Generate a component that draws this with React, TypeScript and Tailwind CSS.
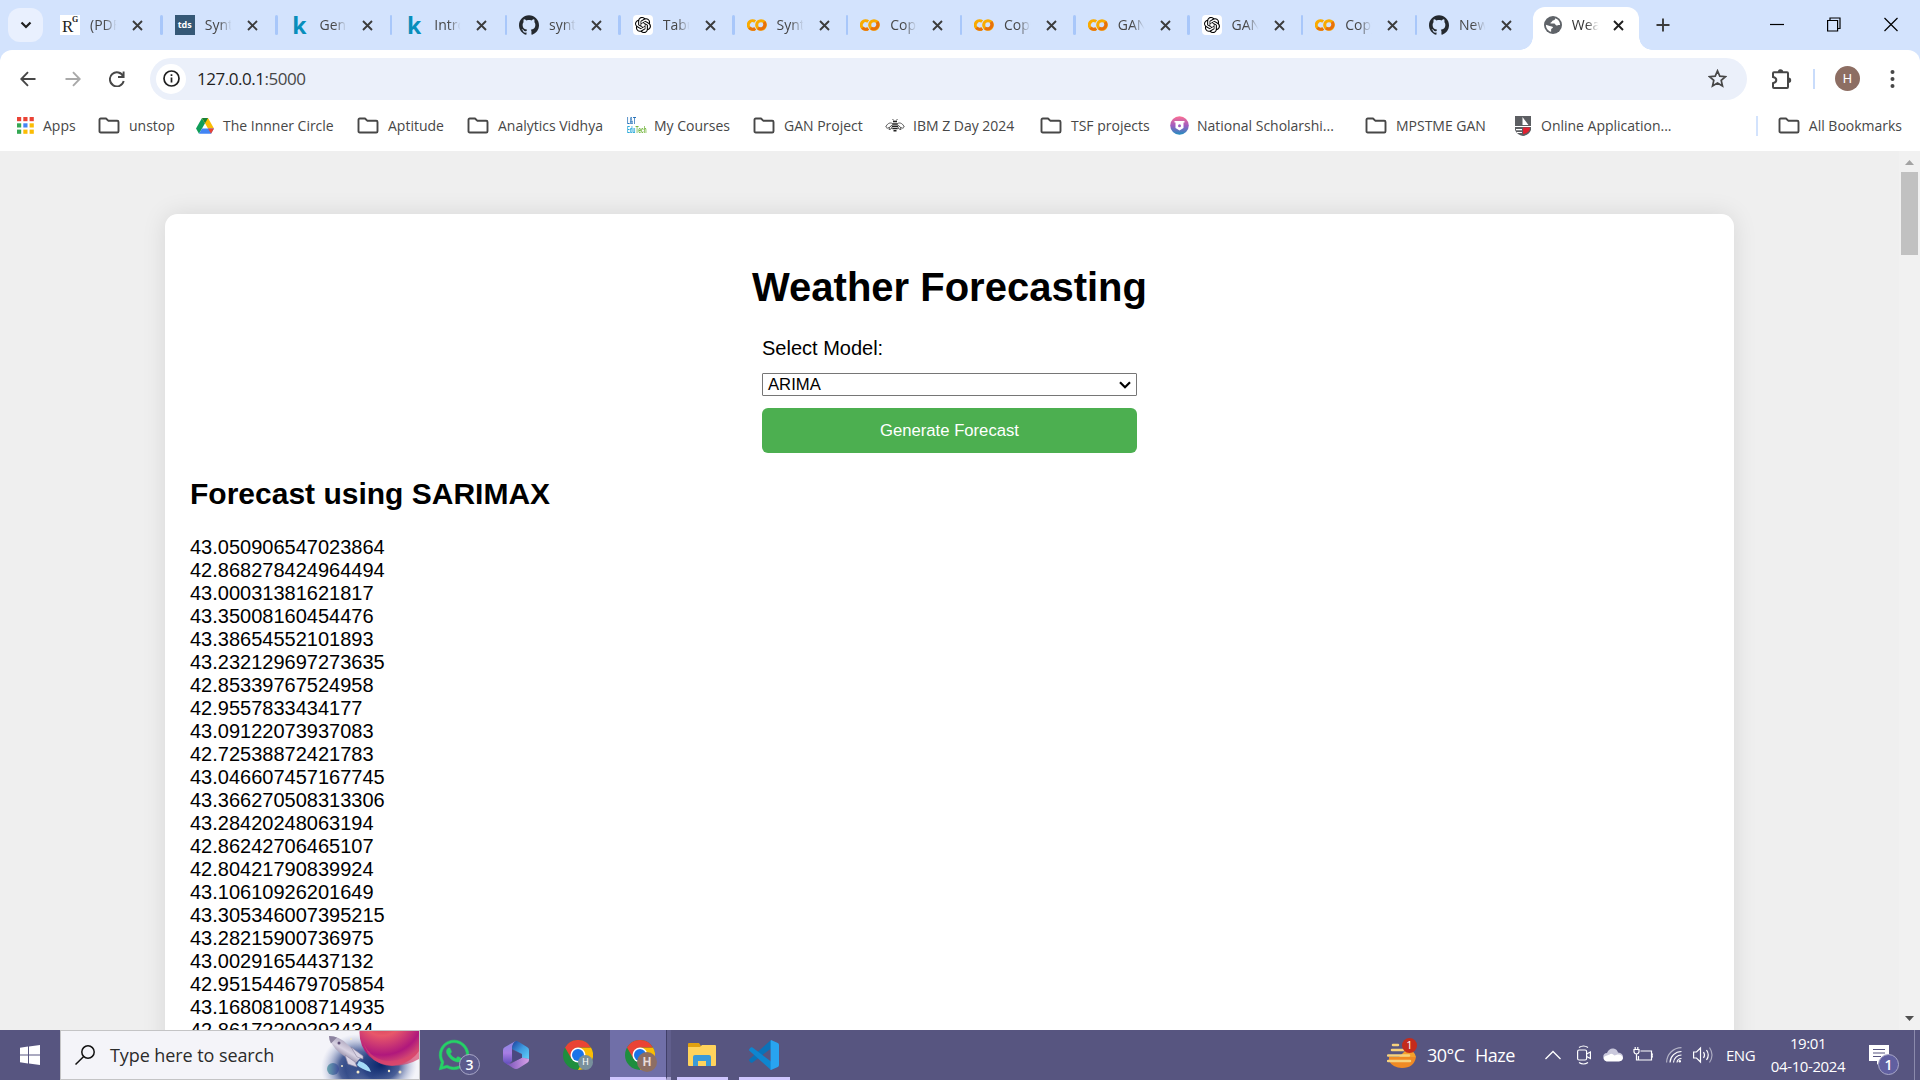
import React from "react";
import { SiGithub, SiOpenai } from "react-icons/si";
import { FaWhatsapp } from "react-icons/fa";

const UI = "font-['Open_Sans','Noto_Sans',sans-serif]";

const X = ({ c = "#3c3c3c" }: { c?: string }) => (
  <svg className="h-[11px] w-[11px] shrink-0" viewBox="0 0 11 11" stroke={c} strokeWidth="1.9" fill="none">
    <path d="M1 1l9 9M10 1l-9 9" />
  </svg>
);

const Folder = () => (
  <svg className="h-[18px] w-[22px] shrink-0" viewBox="0 0 22 18" fill="none" stroke="#474747" strokeWidth="1.9" strokeLinejoin="round">
    <path d="M1.500 14.200V2.800q0-1.300 1.300-1.300H8l2.200 2.200h9q1.300 0 1.300 1.300v9.200q0 1.300-1.300 1.300H2.800q-1.300 0-1.300-1.300z" />
  </svg>
);

const RG = () => (
  <span className="relative block h-5 w-5 bg-white font-['Liberation_Serif',serif] leading-none text-[#222]">
    <span className="absolute left-[2px] top-[3px] text-[17px]">R</span>
    <span className="absolute left-[12px] top-[1px] text-[8px] font-bold">G</span>
  </span>
);
const Tds = () => (
  <span className="flex h-5 w-5 items-center justify-center bg-[#355876] pb-px font-['Open_Sans',sans-serif] text-[9px] font-bold text-white">tds</span>
);
const K = () => (
  <span className="flex h-5 w-5 items-center justify-center font-['Open_Sans',sans-serif] text-[23px] font-bold leading-[20px] text-[#088ebb]">k</span>
);
const Gh = () => <SiGithub className="h-5 w-5 text-[#24292f]" />;
const Gpt = () => (
  <span className="flex h-5 w-5 items-center justify-center rounded-[4px] bg-white">
    <SiOpenai className="h-4 w-4 text-black" />
  </span>
);
const Colab = () => (
  <svg className="h-5 w-5" viewBox="0 0 20 20" fill="none" strokeWidth="3.1">
    <path d="M8.200 6.600A4.300 4.300 0 1 0 8.200 13.400" stroke="#f9ab00" />
    <path d="M2.400 12.800A4.300 4.300 0 0 0 8.200 13.400" stroke="#e8710a" />
    <circle cx="14" cy="10" r="4.300" stroke="#f9ab00" />
    <path d="M11 13A4.300 4.300 0 0 0 17 7" stroke="#e8710a" />
  </svg>
);
const Globe = () => (
  <svg className="h-[18px] w-[18px]" viewBox="0 0 18 18">
    <circle cx="9" cy="9" r="9" fill="#5f6368" />
    <path d="M11.200 2.300c0 1.500-.9 2-2.200 2.200-.9.200-.8 1.300-1.700 1.700-1 .4-1.100 1.300-.2 1.400h3c1.300 0 1.200 1.700 2.300 1.900 1.100.2 1.900-.9 3.700-.5 0-3-1.800-5.700-4.900-6.700z" fill="#fff" />
    <path d="M1.900 8.700l3.800 1.200c1.500.4 2.900.2 3.200 1.300.3 1.200-1.700 1-1.800 2.200-.1 1 .4 1.500-.1 2.400C4 15 1.900 12 1.900 8.700z" fill="#fff" />
  </svg>
);

const tabs: [React.FC, string][] = [
  [RG, "(PDF)"], [Tds, "Synth"], [K, "Gene"], [K, "Intro"], [Gh, "synth"], [Gpt, "Tabul"], [Colab, "Synth"],
  [Colab, "Copy"], [Colab, "Copy"], [Colab, "GAN"], [Gpt, "GAN"], [Colab, "Copy"], [Gh, "New"],
];

function TabText({ children, c }: { children: string; c: string }) {
  return (
    <span className={"ml-[10px] w-[28px] overflow-hidden whitespace-nowrap text-[14px] leading-[22px] [mask-image:linear-gradient(to_right,#000_50%,transparent_95%)] " + c}>
      {children}
    </span>
  );
}

function TabStrip() {
  return (
    <div className="flex h-[50px] shrink-0 bg-[#d3e3fd] pl-2">
      <div className="mt-2 flex h-[34px] w-[35px] items-center justify-center rounded-[12px] bg-[#e9f0fe]">
        <svg className="h-[8px] w-[12px]" viewBox="0 0 12 8" fill="none" stroke="#1f1f1f" strokeWidth="2.200"><path d="M1.500 1.500L6 6l4.500-4.500" /></svg>
      </div>
      <div className="ml-[3px] flex">
        {tabs.map(([Icon, t], i) => (
          <div key={i} className={"flex h-[50px] shrink-0 items-center pl-[14px] " + (i < 4 ? "w-[114.75px]" : "w-[113.75px]")}>
            <Icon />
            <TabText c="text-[#474747]">{t}</TabText>
            <span className="ml-[14px] flex"><X /></span>
            {i < 12 && <span className="ml-auto mr-[-2px] h-5 w-[2.500px] rounded bg-[#a8c7fa]" />}
          </div>
        ))}
      </div>
      <div className="ml-[-9px] flex items-end">
        <span className="h-[13px] w-[13px] bg-[radial-gradient(circle_at_0_0,transparent_12.5px,#fff_13px)]" />
        <div className="flex h-[43px] w-[106px] items-center rounded-t-[12px] bg-white pb-[7px] pl-[11px]">
          <Globe />
          <TabText c="text-[#333]">Weat</TabText>
          <span className="ml-[13px] flex"><X c="#1f1f1f" /></span>
        </div>
        <span className="h-[13px] w-[13px] bg-[radial-gradient(circle_at_100%_0,transparent_12.5px,#fff_13px)]" />
      </div>
      <svg className="ml-[4px] mt-[18px] h-[14px] w-[14px]" viewBox="0 0 14 14" stroke="#3c3c3c" strokeWidth="1.900"><path d="M7 .5v13M.5 7h13" /></svg>
      <div className="ml-auto mr-[22px] mt-[17px] flex items-start gap-[43px]">
        <svg className="h-[15px] w-[14px]" viewBox="0 0 14 15" stroke="#000" strokeWidth="1.200"><path d="M0 7.500h14" /></svg>
        <svg className="h-[15px] w-[14px]" viewBox="0 0 14 15" fill="none" stroke="#000" strokeWidth="1.200"><path d="M.6 3.500h10v10.500h-10zM3 3.500V1h10v10.500h-2.400" /></svg>
        <svg className="h-[15px] w-[14px]" viewBox="0 0 14 15" stroke="#000" strokeWidth="1.200"><path d="M.5 1l13 13M13.500 1l-13 13" /></svg>
      </div>
    </div>
  );
}

function Toolbar() {
  return (
    <div className="flex h-[57px] shrink-0 items-center rounded-t-[12px] bg-white pl-5 pr-5">
      <svg className="h-4 w-4" viewBox="0 0 16 16" fill="none" stroke="#474747" strokeWidth="1.900"><path d="M15.500 8H1.500M8 1.200L1.300 8 8 14.800" /></svg>
      <svg className="ml-[29px] h-4 w-4" viewBox="0 0 16 16" fill="none" stroke="#a9a9a9" strokeWidth="1.900"><path d="M.5 8h14M8 1.200L14.700 8 8 14.800" /></svg>
      <svg className="ml-[28px] h-4 w-4" viewBox="0 0 16 16" fill="none" stroke="#474747" strokeWidth="1.900"><path d="M14.300 5.500A7 7 0 1 0 14.700 10M14.600.5v5.500H9" /></svg>
      <div className="ml-[25px] flex h-[42px] w-[1597px] items-center rounded-full bg-[#ebf0fa] pl-[6px] pr-[20px]">
        <span className="flex h-[30px] w-[30px] items-center justify-center rounded-full bg-white">
          <svg className="h-[17px] w-[17px]" viewBox="0 0 17 17" fill="none" stroke="#1f1f1f" strokeWidth="1.700"><circle cx="8.500" cy="8.500" r="7.500" /><path d="M8.500 7.500v5M8.500 4.300v1.700" /></svg>
        </span>
        <span className="ml-[11px] pt-px text-[17px] tracking-[-0.47px] text-[#1f1f1f]">127.0.0.1<span className="text-[#474747]">:5000</span></span>
        <svg className="ml-auto h-[19px] w-[19px]" viewBox="0 0 19 19" fill="none" stroke="#474747" strokeWidth="1.700" strokeLinejoin="miter"><path d="M9.500 1.800l2.300 5.300 5.700.5-4.300 3.800 1.300 5.600-5-3-5 3 1.300-5.600L1.500 7.600l5.700-.5z" /></svg>
      </div>
      <svg className="ml-[24px] h-[21px] w-[21px]" viewBox="0 0 21 21" fill="none">
        <path d="M2 5.200q0-1 1-1h13q1 0 1 1V19q0 1-1 1H3q-1 0-1-1v-3.800q3.300-.6 3.300-3.100T2 9z" stroke="#474747" strokeWidth="2" />
        <path d="M6.800 4a2.700 2.700 0 0 1 5.400 0zM17.500 9.500a2.700 2.700 0 0 1 0 5.400z" fill="#474747" />
      </svg>
      <span className="ml-[21px] h-5 w-[2px] bg-[#c9dcfb]" />
      <span className="ml-[20px] flex h-[25px] w-[25px] items-center justify-center rounded-full bg-[#8d6e63] font-['Roboto',sans-serif] text-[13px] text-white">H</span>
      <svg className="ml-[30px] h-[18px] w-[5px]" viewBox="0 0 5 18" fill="#474747"><circle cx="2.500" cy="2" r="2" /><circle cx="2.500" cy="9" r="2" /><circle cx="2.500" cy="16" r="2" /></svg>
    </div>
  );
}

const AppsIcon = () => (
  <svg className="h-[17px] w-[17px] shrink-0" viewBox="0 0 17 17">
    {["#ea4335", "#ea4335", "#ea4335", "#34a853", "#4285f4", "#fbbc04", "#34a853", "#fbbc04", "#fbbc04"].map((c, i) => (
      <rect key={i} x={(i % 3) * 6.300} y={Math.floor(i / 3) * 6.300} width="4.200" height="4.200" fill={c} />
    ))}
  </svg>
);
const Drive = () => (
  <svg className="h-[16px] w-[18px] shrink-0" viewBox="0 0 18 16">
    <path d="M6 0L0 10.500l3 5.200L9 5.200z" fill="#0f9d58" />
    <path d="M6 0h6l6 10.500h-6z" fill="#fbbc04" />
    <path d="M6 10.500h12l-3 5.200H3z" fill="#4285f4" />
    <path d="M12 10.500h6l-3 5.200z" fill="#ea4335" />
    <path d="M6 0h6L9 5.200z" fill="#188038" />
  </svg>
);
const Edu = () => (
  <span className="flex h-[18px] w-[19px] shrink-0 flex-col font-['Roboto',sans-serif] text-[9px] font-bold leading-[9px]">
    <span className="origin-left scale-x-[0.55] text-[#2470b8]">L&amp;T</span>
    <span className="origin-left scale-x-[0.56] whitespace-nowrap text-[#28a8d8]">Edu<span className="text-[#78b843]">Tech</span></span>
  </span>
);
const Bee = () => (
  <svg className="h-[15px] w-[20px] shrink-0" viewBox="0 0 20 15" fill="none" stroke="#555" strokeWidth="1">
    <path d="M7.500 5.500C4.500 4 2 6 .8 9c1.200 1.800 3 1.300 3.500 0M12.500 5.500c3-1.500 5.500.5 6.700 3.500-1.200 1.800-3 1.300-3.500 0M7.300 7Q3.500 9 4 11.500q2.500.5 3.300-3M12.700 7q3.800 2 3.300 4.500-2.500.5-3.300-3" />
    <path d="M7.500 1l1.300 1.500M12.500 1l-1.300 1.500" />
    <path d="M8 3.500h4M7.300 6h5.400M7 8.300h6M7.300 10.600h5.400M8.500 12.800h3" stroke="#222" strokeWidth="1.500" />
  </svg>
);
const Nat = () => (
  <svg className="h-[19px] w-[19px] shrink-0" viewBox="0 0 19 19">
    <defs><linearGradient id="nat" x1="0" y1="0" x2="0" y2="1"><stop offset="0" stopColor="#ff6f91" /><stop offset=".5" stopColor="#a05cc0" /><stop offset="1" stopColor="#1f8fc0" /></linearGradient></defs>
    <circle cx="9.500" cy="9.500" r="9.300" fill="url(#nat)" />
    <path d="M4.500 5h10v1.500h-1v5.500l-4 2.500-4-2.500V6.500h-1z" fill="#fff" />
    <circle cx="9.500" cy="9.800" r="1.500" fill="#a05cc0" />
  </svg>
);
const Shield = () => (
  <svg className="h-[20px] w-[16px] shrink-0" viewBox="0 0 16 20">
    <path d="M0 0h16v14q-2 5-8 6-6-1-8-6z" fill="#5c5e62" />
    <path d="M7.500 1l6 8h-6zM0 10h16v1H0zM1 13h6v1.200H1zM2 16h5v1H2z" fill="#fff" />
    <path d="M8 11.500h7q0 5-7 7z" fill="#e02030" />
  </svg>
);

const marks: [React.FC, string, string, string][] = [
  [AppsIcon, "Apps", "w-[81px]", "gap-[9px]"],
  [Folder, "unstop", "w-[98px]", "gap-[9px]"],
  [Drive, "The Innner Circle", "w-[161px]", "gap-[9px]"],
  [Folder, "Aptitude", "w-[110px]", "gap-[9px]"],
  [Folder, "Analytics Vidhya", "w-[160px]", "gap-[9px]"],
  [Edu, "My Courses", "w-[126px]", "gap-[8px]"],
  [Folder, "GAN Project", "w-[132px]", "gap-[9px]"],
  [Bee, "IBM Z Day 2024", "w-[155px]", "gap-[8px]"],
  [Folder, "TSF projects", "w-[130px]", "gap-[9px]"],
  [Nat, "National Scholarshi...", "w-[195px]", "gap-[8px]"],
  [Folder, "MPSTME GAN", "w-[150px]", "gap-[9px]"],
  [Shield, "Online Application...", "w-[220px]", "gap-[10px]"],
];

function Bookmarks() {
  return (
    <div className="flex h-[44px] shrink-0 items-center bg-white pb-[7px] pl-[17px] pr-[18px] text-[14px] tracking-[-0.01px] text-[#474747]">
      {marks.map(([Icon, t, w, g]) => (
        <div key={t} className={"flex shrink-0 items-center whitespace-nowrap " + w + " " + g}><Icon />{t}</div>
      ))}
      <span className="ml-auto mr-[20px] h-5 w-[2px] bg-[#d3e3fd]" />
      <div className="flex items-center gap-[9px] whitespace-nowrap"><Folder />All Bookmarks</div>
    </div>
  );
}

const values = [
  "43.050906547023864", "42.868278424964494", "43.00031381621817", "43.35008160454476", "43.38654552101893", "43.232129697273635",
  "42.85339767524958", "42.9557833434177", "43.09122073937083", "42.72538872421783", "43.046607457167745", "43.366270508313306",
  "43.28420248063194", "42.86242706465107", "42.80421790839924", "43.10610926201649", "43.305346007395215", "43.28215900736975",
  "43.00291654437132", "42.951544679705854", "43.168081008714935", "42.86172200292434",
];

function Page() {
  return (
    <div className="flex h-[879px] shrink-0 overflow-hidden bg-[#efefef] font-['Liberation_Sans',Arial,sans-serif] text-[20px] leading-[23px] text-black">
      <div className="h-[1000px] flex-1 pl-[165px] pt-[63px]">
        <div className="h-[940px] w-[1569px] rounded-[12.5px] bg-white px-[25px] pt-[50px] shadow-[0_0_25px_rgba(0,0,0,0.1)]">
          <h1 className="text-center text-[40px] font-bold leading-[46px]">Weather Forecasting</h1>
          <div className="mx-auto mt-[27px] flex w-[375px] flex-col">
            <label>Select Model:</label>
            <div className="mt-[13px] flex h-[23px] items-center justify-between rounded-[1px] border border-[#767676] bg-white pl-[5px] pr-[5px] text-[16.670px] leading-[20px]">
              ARIMA
              <svg className="h-[8px] w-[12px]" viewBox="0 0 12 8" fill="none" stroke="#000" strokeWidth="2.200"><path d="M1 1.200L6 6.200l5-5" /></svg>
            </div>
            <button className="mt-[12px] h-[45px] rounded-[6px] bg-[#4caf50] text-[16.670px] text-white">Generate Forecast</button>
          </div>
          <h2 className="mt-[24px] text-[30px] font-bold leading-[34px]">Forecast using SARIMAX</h2>
          <div className="mt-[25px]">{values.map((v) => <div key={v}>{v}</div>)}</div>
        </div>
      </div>
      <div className="flex w-[21px] flex-col items-center bg-[#f1f1f1]">
        <svg className="mt-[9px] h-[5px] w-[9px]" viewBox="0 0 9 5"><path d="M0 5L4.500 0 9 5z" fill="#a3a3a3" /></svg>
        <div className="mt-[7px] h-[83px] w-[17px] bg-[#c1c1c1]" />
        <svg className="mb-[9px] mt-auto h-[5px] w-[9px]" viewBox="0 0 9 5"><path d="M0 0L4.500 5 9 0z" fill="#505050" /></svg>
      </div>
    </div>
  );
}

const Rocket = () => (
  <svg className="h-[48px] w-[98px]" viewBox="0 0 98 48">
    <defs>
      <radialGradient id="sky"><stop offset="0" stopColor="#08256a" /><stop offset=".5" stopColor="#2c4586" stopOpacity=".85" /><stop offset="1" stopColor="#a9b4d8" stopOpacity="0" /></radialGradient>
      <radialGradient id="planet" cx=".35" cy=".2" r=".85"><stop offset="0" stopColor="#c02848" /><stop offset=".4" stopColor="#e8586a" /><stop offset=".75" stopColor="#b0187c" /><stop offset="1" stopColor="#e4606c" /></radialGradient>
      <linearGradient id="moon"><stop offset="0" stopColor="#6aa4b0" /><stop offset="1" stopColor="#3f4f9a" /></linearGradient>
      <linearGradient id="hull" x1="0.3" y1="0.800" x2=".7" y2=".2"><stop offset="0" stopColor="#6f6788" /><stop offset=".5" stopColor="#d8d2e2" /><stop offset="1" stopColor="#a79fb8" /></linearGradient>
    </defs>
    <ellipse cx="36" cy="37" rx="36" ry="34" fill="url(#sky)" />
    <ellipse cx="60" cy="34" rx="36" ry="30" fill="url(#sky)" />
    <circle cx="71" cy="2" r="32.500" fill="url(#planet)" />
    <path d="M42 11q8 19 27 19 14 0 29-11v9q-12 7-27 7-22-1-29-24z" fill="#d8446c" opacity=".7" />
    <circle cx="12" cy="38" r="6" fill="url(#moon)" />
    <path d="M38 30q10 3 12 11-10-3-14-7z" fill="#a4dcf8" />
    <path d="M8 5q10 0 18 8l14 13-6 7-15-11Q10 15 8 5z" fill="url(#hull)" />
    <path d="M30 16l12 9v3l-6-2zM24 24l3 9 9 3-2-5z" fill="#d9d3e4" stroke="#8d84a0" strokeWidth=".6" />
    <path d="M8 5q5 0 8 1.500l-6 6Q8 9 8 5z" fill="#8d84a0" />
    <circle cx="18" cy="12" r="1.500" fill="#5f5078" />
    <g fill="#f3e9c8"><circle cx="37" cy="41" r="1.500" /><circle cx="68" cy="40" r="1.200" /><circle cx="79" cy="41" r="1.500" /><circle cx="21" cy="35" r="1" /><circle cx="30" cy="8" r="1" /></g>
  </svg>
);

const Chrome = () => (
  <svg className="h-[30px] w-[30px]" viewBox="0 0 30 30">
    <circle cx="15" cy="15" r="15" fill="#1e8e3e" />
    <path d="M15 7.500h13A15 15 0 0 1 15 30l6.500-11.250z" fill="#fbbc04" />
    <path d="M2 7.500A15 15 0 0 1 28 7.500H15l-6.500 11.250z" fill="#ea4335" />
    <circle cx="15" cy="15" r="7.500" fill="#fff" /><circle cx="15" cy="15" r="6" fill="#1a73e8" />
  </svg>
);

const M365 = () => (
  <svg className="h-[28px] w-[26px]" viewBox="0 0 26 28">
    <defs>
      <linearGradient id="m1" x1="0" y1="0" x2="0" y2="1"><stop offset="0" stopColor="#8a8be4" /><stop offset=".5" stopColor="#a87ee4" /><stop offset="1" stopColor="#5a4bb8" /></linearGradient>
      <linearGradient id="m2" x1="0" y1="0" x2="1" y2="1"><stop offset="0" stopColor="#1b3f9c" /><stop offset=".5" stopColor="#3f9ae0" /><stop offset="1" stopColor="#5fd0f8" /></linearGradient>
      <linearGradient id="m3"><stop offset="0" stopColor="#7450b8" /><stop offset="1" stopColor="#d8a0e8" /></linearGradient>
    </defs>
    <path d="M11 1L2 6Q0 7 0 9v10q0 2 2 3l3 2 4-4V8q0-5 4-8z" fill="url(#m1)" />
    <path d="M9 8q0-6 4-8 1.500 0 3 1l8 5q2 1 2 3v9l-7-1v-4z" fill="url(#m2)" />
    <path d="M3 22.500h5l11-6 7 1.500v1q0 2-2 3l-8 5q-3 2-6 0z" fill="url(#m3)" />
    <path d="M9 8.500l10 5.200v3L9.500 21z" fill="#4a4880" />
  </svg>
);

function Taskbar() {
  return (
    <div className="flex h-[50px] shrink-0 bg-[#575580] text-white">
      <div className="flex w-[60px] items-center justify-center">
        <svg className="h-5 w-5" viewBox="0 0 20 20" fill="#fff"><path d="M0 2.700L8 1.600V9.500H0zM9 1.500L20 0v9.500H9zM0 10.500h8v8L0 17.300zM9 10.500h11V20L9 18.500z" /></svg>
      </div>
      <div className="flex w-[360px] items-center border border-[#c4c4c6] bg-[#f4f4f9] pl-[14px]">
        <svg className="h-5 w-5" viewBox="0 0 20 20" fill="none" stroke="#111" strokeWidth="1.500"><circle cx="13" cy="7" r="6.200" /><path d="M8.700 11.500L.5 19.500" /></svg>
        <span className="ml-[15px] whitespace-nowrap text-[18px] tracking-[-0.08px] text-[#2b2b2b]">Type here to search</span>
        <span className="ml-auto"><Rocket /></span>
      </div>
      <div className="relative ml-[19px] mt-[10px] h-[30px] w-[30px]">
        <FaWhatsapp className="h-[34px] w-[34px] -translate-x-[2px] -translate-y-[2px] text-[#25d366]" stroke="#25d366" strokeWidth="8" />
        <span className="absolute left-[20px] top-[14px] flex h-[21px] w-[21px] items-center justify-center rounded-full border border-[#a9a8c8] bg-[#5b5a8c] text-[14px] font-semibold">3</span>
      </div>
      <div className="ml-[34px] mt-[11px]"><M365 /></div>
      <div className="relative ml-[34px] mt-[10px] h-[30px] w-[30px]">
        <Chrome />
        <span className="absolute left-[15px] top-[15px] flex h-[15px] w-[15px] items-center justify-center rounded-full bg-[#78909c] font-['Roboto',sans-serif] text-[9px]">H</span>
      </div>
      <div className="ml-[17px] flex h-[50px] w-[56px] justify-center border-b-[3px] border-[#cfc6ff] bg-[#706fa8] pt-[10px]">
        <div className="relative h-[30px] w-[30px] translate-x-[2px]">
          <Chrome />
          <span className="absolute left-[12px] top-[12px] flex h-[20px] w-[20px] items-center justify-center rounded-full bg-[#8d6e63] font-['Roboto',sans-serif] text-[12px] font-bold text-[#e8dcd8]">H</span>
        </div>
      </div>
      <div className="h-[50px] w-[5px] border-b-[3px] border-l border-b-[#a8a3cf] border-l-[#403f68] bg-[#605e8c]" />
      <div className="ml-[6px] flex h-[50px] w-[51px] justify-center border-b-[3px] border-[#cfc6ff] pr-[2px] pt-[13px]">
        <svg className="h-[23px] w-[28px]" viewBox="0 0 28 23">
          <path d="M0 1q0-1 1-1h10l2 3v4H0z" fill="#e0a010" />
          <path d="M0 4h12l2-2h13q1 0 1 1v19q0 1-1 1H1q-1 0-1-1z" fill="#ffd35c" />
          <path d="M5 23v-9q0-2 2-2h14q2 0 2 2v9h-5v-5h-8v5z" fill="#3a9ad8" />
        </svg>
      </div>
      <div className="ml-[11px] flex h-[50px] w-[51px] justify-center border-b-[3px] border-[#cfc6ff] pr-[1px] pt-[10px]">
        <svg className="h-[30px] w-[30px]" viewBox="0 0 30 30">
          <path d="M22 0v8.500L3.500 22.500q-1 .5-1.800 0L.4 21q-.8-1 0-1.800z" fill="#0b72b8" />
          <path d="M22 30v-8.500L3.500 7.500q-1-.6-1.800 0L.4 9q-.8 1 0 1.800z" fill="#0e86d0" />
          <path d="M22 0l6.800 3Q30 3.700 30 5v20q0 1.300-1.200 2L22 30q-1 0-.4-1V1z" fill="#28a4f0" />
        </svg>
      </div>
      <div className="ml-auto flex h-[50px] items-center">
        <div className="relative h-[28px] w-[29px]">
          <svg className="h-[28px] w-[29px]" viewBox="0 0 29 28">
            <path d="M2 16h27Q27 27 15 27 6 27 2 20z" fill="#f08a24" /><path d="M20 8q8 2 9 8H12z" fill="#f5a02c" />
            <g stroke="#f7d27c" strokeWidth="2.500" strokeLinecap="round"><path d="M6 4h5M5 9h12M1 14.500h21M1 20h22" /></g>
          </svg>
          <span className="absolute left-[15px] top-[-3px] flex h-[15px] w-[15px] items-center justify-center rounded-full bg-[#c42b1c] text-[11px]">1</span>
        </div>
        <span className="ml-[11px] w-[48px] text-[18px] tracking-[-0.5px]">30°C</span>
        <span className="w-[70px] text-[18px] tracking-[-0.5px]">Haze</span>
        <svg className="h-[10px] w-[16px]" viewBox="0 0 16 10" fill="none" stroke="#fff" strokeWidth="1.300"><path d="M.5 9L8 1.500 15.500 9" /></svg>
        <svg className="ml-[16px] h-[20px] w-[14px]" viewBox="0 0 14 20" fill="none" stroke="#fff" strokeWidth="1.200"><rect x=".6" y="5" width="9" height="10" rx="1.500" /><path d="M9.600 9l3.800-2v6.500l-3.800-2M2 2.500Q6.500-.5 11 2.500M2 17.500q4.500 3 9 0" /></svg>
        <svg className="ml-[12px] h-[14px] w-[20px]" viewBox="0 0 20 14"><path d="M4.500 13a4 4 0 0 1-.5-8Q6 0 10.500.5 14 1 15 4.500q5 .5 5 4.500 0 4-4.500 4z" fill="#c9c8dc" /><path d="M3.500 13.500q-4-1.500-2-5l5-2q2-2 5 1l3-1q4.500-.5 5.500 3.500-.5 3-4 3.500z" fill="#fff" /></svg>
        <svg className="ml-[10px] h-[16px] w-[20px]" viewBox="0 0 20 16" fill="none" stroke="#fff" strokeWidth="1.200"><path d="M7.500 4h11v9h-13V9M18.500 7H20v3h-1.500M1 2.500h5v2.500q-.5 2-2.500 2T1 5zM2.200 0v2.500M4.800 0v2.500M3.500 7v6h2" /></svg>
        <svg className="ml-[13px] h-[16px] w-[16px]" viewBox="0 0 16 16" fill="none" stroke="#fff" strokeWidth="1.200"><path d="M.6 15.500A15 15 0 0 1 15.500.6" opacity=".55" /><path d="M4 15.500A11.500 11.500 0 0 1 15.500 4.500M7.500 15.500a8 8 0 0 1 8-7.500M11 15.500a4.500 4.500 0 0 1 4.500-4" /><circle cx="13.800" cy="14.200" r="1.200" fill="#fff" stroke="none" /></svg>
        <svg className="ml-[11px] h-[18px] w-[20px]" viewBox="0 0 20 18" fill="none" stroke="#fff" strokeWidth="1.200"><path d="M.6 6h2.900L7.500 2v14l-4-4H.6zM10.500 6q2 3 0 6M13.500 4q3.500 5 0 10" /><path d="M16.500 1.500q5 7.500 0 15" opacity=".5" /></svg>
        <span className="ml-[13px] w-[37px] text-[15px] tracking-[-0.5px]">ENG</span>
        <div className="flex w-[90px] flex-col items-center text-[15px] leading-[23px] tracking-[-0.400px]"><span>19:01</span><span>04-10-2024</span></div>
        <div className="relative ml-[16px] h-[20px] w-[20px]">
          <svg className="h-[20px] w-[20px]" viewBox="0 0 20 20"><path d="M0 0h20v16H11l-3 4v-4H0z" fill="#fff" /><path d="M4 4.500h12M4 8h12M4 11.500h8" stroke="#575580" strokeWidth="1.200" /></svg>
          <span className="absolute left-[9px] top-[9px] flex h-[21px] w-[21px] items-center justify-center rounded-full border border-[#a9a8c8] bg-[#605fa0] text-[14px] font-semibold">1</span>
        </div>
        <span className="ml-[25px] h-[50px] w-[6px] border-l border-[#8b8aac]" />
      </div>
    </div>
  );
}

export default function App() {
  return (
    <div className={"flex h-[1080px] w-[1920px] flex-col overflow-hidden bg-white " + UI}>
      <TabStrip />
      <div className="flex shrink-0 flex-col bg-[#d3e3fd]"><Toolbar /></div>
      <Bookmarks />
      <Page />
      <Taskbar />
    </div>
  );
}
